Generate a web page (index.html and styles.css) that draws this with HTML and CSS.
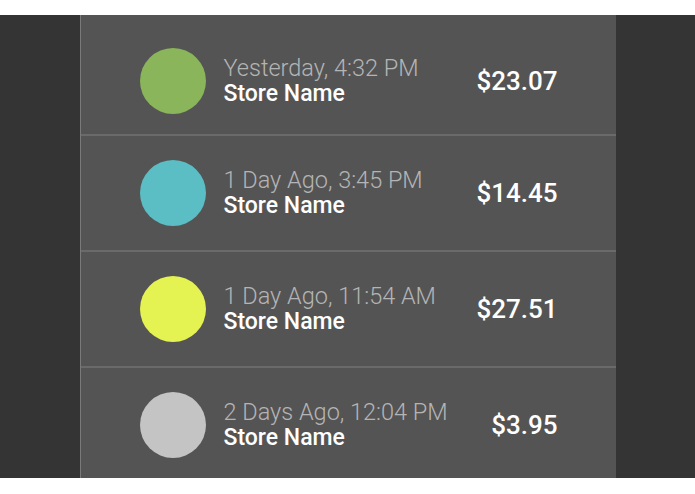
FILE: index.html
```html
<!DOCTYPE html>
<html lang="en">
<head>
    <meta charset="UTF-8">
    <meta name="viewport" content="width=device-width, initial-scale=1.0">
    <title>Recent Purchases</title>
    <link rel="stylesheet" href="styles.css">
</head>
<body>
    <div class="screen">
        <div class="list">
            <div class="row first">
                <div class="dot green"></div>
                <div class="info">
                    <div class="when">Yesterday, 4:32 PM</div>
                    <div class="store">Store Name</div>
                </div>
                <div class="amount">$23.07</div>
            </div>
            <div class="row">
                <div class="dot teal"></div>
                <div class="info">
                    <div class="when">1 Day Ago, 3:45 PM</div>
                    <div class="store">Store Name</div>
                </div>
                <div class="amount">$14.45</div>
            </div>
            <div class="row">
                <div class="dot lime"></div>
                <div class="info">
                    <div class="when">1 Day Ago, 11:54 AM</div>
                    <div class="store">Store Name</div>
                </div>
                <div class="amount">$27.51</div>
            </div>
            <div class="row">
                <div class="dot grey"></div>
                <div class="info">
                    <div class="when">2 Days Ago, 12:04 PM</div>
                    <div class="store">Store Name</div>
                </div>
                <div class="amount">$3.95</div>
            </div>
        </div>
    </div>
</body>
</html>
```
FILE: styles.css
```css
body {
    margin: 0;
    padding: 0;
    background-color: #fff;
    font-family: Roboto, "Liberation Sans", sans-serif;
}
.screen {
    margin: 15px 0 16px;
    height: 463px;
    background-color: #343434;
}
.list {
    width: 535px;
    height: 100%;
    margin: 0 auto;
    background-color: #545454;
    border-left: 1px solid #7a7a7a;
    overflow: hidden;
}
.row {
    display: flex;
    align-items: center;
    padding: 24px 58px 24px 59px;
    border-bottom: 2px solid #6a6a6a;
}
.row.first {
    padding-top: 33px;
    padding-bottom: 20px;
}
.dot {
    width: 66px;
    height: 66px;
    border-radius: 50%;
    flex-shrink: 0;
}
.green { background-color: #8ab55a; }
.teal { background-color: #5bbec4; }
.lime { background-color: #e4f252; }
.grey { background-color: #c4c4c4; }
.info {
    margin-left: 18px;
}
.when {
    font-size: 23.5px;
    font-weight: 300;
    line-height: 25px;
    color: #b4b4b4;
}
.store {
    font-size: 23px;
    font-weight: 500;
    line-height: 25px;
    color: #fff;
}
.amount {
    margin-left: auto;
    font-size: 26px;
    font-weight: 500;
    color: #fff;
}
```
